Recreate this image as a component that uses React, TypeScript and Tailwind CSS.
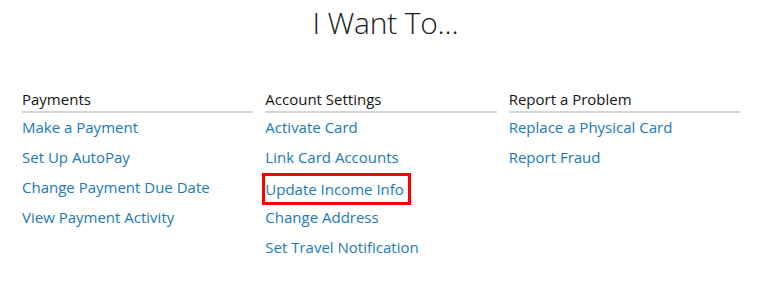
const sections = [
  {
    title: "Payments",
    links: ["Make a Payment", "Set Up AutoPay", "Change Payment Due Date", "View Payment Activity"],
  },
  {
    title: "Account Settings",
    links: ["Activate Card", "Link Card Accounts", "Update Income Info", "Change Address", "Set Travel Notification"],
  },
  {
    title: "Report a Problem",
    links: ["Replace a Physical Card", "Report Fraud"],
  },
]

const highlighted = "Update Income Info"

export default function App() {
  return (
    <div className="min-h-[290px] w-full bg-white font-['Open_Sans',sans-serif] text-[#141414]">
      <h1 className="pt-[3px] text-center text-[30px] font-light leading-[40px] tracking-[-0.2px] text-[#1a1a1a]">
        I Want To...
      </h1>

      <div className="mt-[46px] grid grid-cols-3 gap-3 pl-[22px] pr-[31px]">
        {sections.map((section) => (
          <div key={section.title}>
            <h2 className="border-b-2 border-[#cfd6dd] pb-[2px] text-[15px] leading-[20px] text-[#141414]">
              {section.title}
            </h2>
            <ul className="-mt-px">
              {section.links.map((link) => (
                <li key={link} className="h-[30px] leading-[30px]">
                  {link === highlighted ? (
                    <a
                      href="#"
                      className="inline-block align-middle py-[3px] pr-[4px] text-[15px] leading-[20px] text-[#2179b8] outline-3 outline-[#ff0000]"
                    >
                      {link}
                    </a>
                  ) : (
                    <a href="#" className="text-[15px] text-[#2179b8]">
                      {link}
                    </a>
                  )}
                </li>
              ))}
            </ul>
          </div>
        ))}
      </div>
    </div>
  )
}
